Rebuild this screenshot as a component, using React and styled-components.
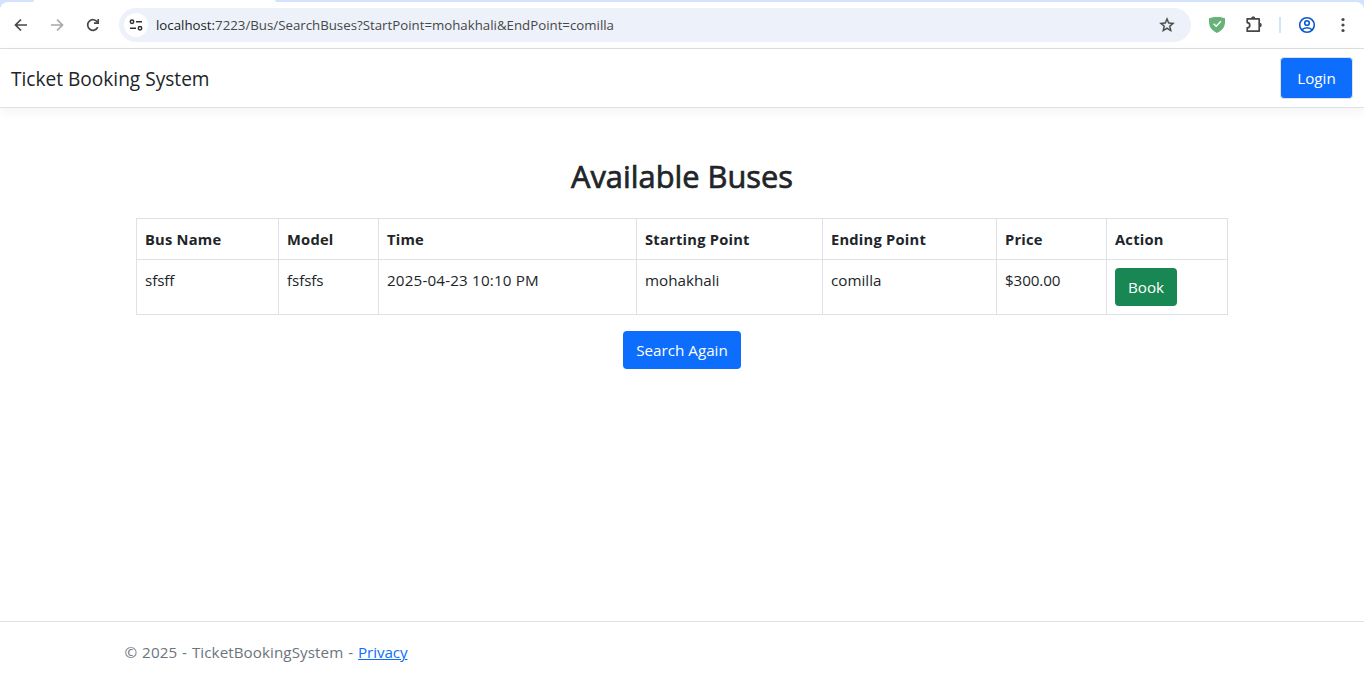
import React from "react";
import styled, { createGlobalStyle, css } from "styled-components";

const GlobalStyle = createGlobalStyle`
  *, *::before, *::after { box-sizing: border-box; }
  body {
    margin: 0;
    background: #fff;
    color: #212529;
    font-family: "Open Sans", "Noto Sans", sans-serif;
    font-size: 15.2px;
    line-height: 24px;
    overflow: hidden;
  }
`;

const Page = styled.div`
  display: flex;
  flex-direction: column;
  height: 681px;
`;

const TabStrip = styled.div`
  display: flex;
  justify-content: space-between;
  height: 2px;
  flex: none;
`;

const StripSegment = styled.div`
  width: ${(p) => p.$width};
  background: #d3e3fd;
  border-radius: ${(p) => p.$radius};
`;

const ToolbarFrame = styled.div`
  flex: none;
  background: linear-gradient(#d3e3fd 10px, #fff 10px);
`;

const Toolbar = styled.div`
  display: flex;
  align-items: center;
  height: 47px;
  padding: 0 12px 1px 12px;
  background: #fff;
  border-bottom: 1px solid #dfdfdf;
  border-radius: 8px 8px 0 0;
`;

const IconButton = styled.button`
  display: flex;
  align-items: center;
  justify-content: center;
  flex: none;
  width: 18px;
  height: 20px;
  margin: 0 0 0 ${(p) => p.$gap || 0}px;
  padding: 0;
  border: 0;
  background: none;
  color: ${(p) => p.$color || "#474747"};
  svg { display: block; }
`;

const AddressBar = styled.div`
  display: flex;
  align-items: center;
  width: 1072px;
  flex: none;
  height: 34px;
  margin-left: 17px;
  padding: 0 15px 0 5px;
  border-radius: 17px;
  background: #ecf1fa;
`;

const SiteInfo = styled.div`
  display: flex;
  align-items: center;
  justify-content: center;
  width: 24px;
  height: 24px;
  border-radius: 50%;
  background: #fff;
`;

const Url = styled.span`
  flex: 1;
  margin-left: 8px;
  color: #474747;
  font-size: 13.27px;
  line-height: 20px;
  white-space: nowrap;
  b { color: #1f1f1f; font-weight: 400; }
`;

const Divider = styled.span`
  flex: none;
  width: 2px;
  height: 16px;
  margin-left: 16px;
  background: #d3e3fd;
`;

const Header = styled.header`
  display: flex;
  align-items: center;
  justify-content: space-between;
  flex: none;
  height: 59px;
  padding: 0 11px;
  border-bottom: 1px solid #dee2e6;
  box-shadow: 0 4px 12px rgba(0, 0, 0, 0.05);
`;

const Brand = styled.a`
  font-size: 19.1px;
  line-height: 30px;
  padding-top: 2px;
`;

const variants = {
  primary: "#0d6efd",
  success: "#198754",
};

const Button = styled.button`
  display: block;
  width: ${(p) => p.$width}px;
  height: 38px;
  padding: 0;
  border: 0;
  border-radius: 4px;
  background: ${(p) => variants[p.$variant]};
  color: #fff;
  font: inherit;
  text-align: center;
  white-space: nowrap;
  ${(p) =>
    p.$outlined &&
    css`
      height: 42px;
      border: 1px solid #dee2e6;
      padding-bottom: 1px;
    `}
`;

const Main = styled.main`
  flex: 1;
  width: 1092px;
  margin: 0 auto;
  padding-top: 49px;
  display: flex;
  flex-direction: column;
  align-items: center;
`;

const Title = styled.h2`
  margin: 0 0 23px;
  font-size: 30.8px;
  font-weight: 400;
  line-height: 38px;
  -webkit-text-stroke: 0.7px currentColor;
`;

const Table = styled.table`
  width: 1092px;
  margin-bottom: 16px;
  border-collapse: collapse;
  table-layout: fixed;
  th, td {
    padding: 8px;
    border: 1px solid #dee2e6;
    text-align: left;
    vertical-align: top;
    white-space: nowrap;
  }
  th {
    font-weight: 700;
    font-size: 14.7px;
    letter-spacing: 0.23px;
  }
`;

const Col = styled.col`
  width: ${(p) => p.$width}px;
`;

const Value = styled.td`
  letter-spacing: ${(p) => p.$spacing || 0}px;
`;

const Footer = styled.footer`
  flex: none;
  height: 60px;
  padding: 18px 124.5px 0;
  border-top: 1px solid #dee2e6;
  color: #6c757d;
  white-space: nowrap;
  letter-spacing: 0.07px;
  word-spacing: 0.9px;
  a {
    color: #0d6efd;
    text-decoration: underline;
    letter-spacing: -0.1px;
  }
`;

const columns = [
  { label: "Bus Name", width: 142 },
  { label: "Model", width: 100 },
  { label: "Time", width: 258 },
  { label: "Starting Point", width: 186 },
  { label: "Ending Point", width: 174 },
  { label: "Price", width: 110 },
  { label: "Action", width: 121 },
];

const buses = [
  [
    { value: "sfsff", spacing: -0.1 },
    { value: "fsfsfs", spacing: -0.1 },
    { value: "2025-04-23 10:10 PM", spacing: 0.17 },
    { value: "mohakhali" },
    { value: "comilla" },
    { value: "$300.00", spacing: -0.1 },
  ],
];

const BackIcon = () => (
  <svg width="14" height="14" viewBox="0 0 14 14" fill="none" stroke="currentColor" strokeWidth="1.7">
    <path d="M13 7H2M7 1.5 1.5 7 7 12.5" />
  </svg>
);

const ForwardIcon = () => (
  <svg width="14" height="14" viewBox="0 0 14 14" fill="none" stroke="currentColor" strokeWidth="1.7">
    <path d="M1 7h11M7 1.5 12.5 7 7 12.5" />
  </svg>
);

const ReloadIcon = () => (
  <svg width="14" height="14" viewBox="0 0 14 14" fill="none" stroke="currentColor" strokeWidth="1.7">
    <path d="M11.8 9.2A5.3 5.3 0 1 1 11.5 4.2" />
    <path d="M12.2 1v4.2H8" />
  </svg>
);

const TuneIcon = () => (
  <svg width="14" height="12" viewBox="0 0 14 12" fill="none" stroke="#303030" strokeWidth="1.5">
    <circle cx="3" cy="2.8" r="1.7" />
    <path d="M7 2.8h6M1 9.2h6" />
    <circle cx="11" cy="9.2" r="1.7" />
  </svg>
);

const StarIcon = () => (
  <svg width="18" height="18" viewBox="0 0 24 24" fill="currentColor" stroke="currentColor" strokeWidth="0.4">
    <path d="m22 9.24-7.19-.62L12 2 9.19 8.63 2 9.24l5.46 4.73L5.82 21 12 17.27 18.18 21l-1.63-7.03L22 9.24zM12 15.4l-3.76 2.27 1-4.28-3.32-2.88 4.38-.38L12 6.1l1.71 4.04 4.38.38-3.32 2.88 1 4.28L12 15.4z" />
  </svg>
);

const ShieldIcon = () => (
  <svg width="16" height="16" viewBox="0 0 16 16">
    <path d="M0 1.2C3 .3 5 0 8 0s5 .3 8 1.2V5c0 5-3 8.8-8 11C3 13.8 0 10 0 5z" fill="#67b279" />
    <path d="m4.600 6.800 2.600 2.500 4.700-5" fill="none" stroke="#fff" strokeWidth="1.3" />
  </svg>
);

const PuzzleIcon = () => (
  <svg width="18" height="18" viewBox="0 0 18 18" fill="none" stroke="currentColor" strokeWidth="1.7" strokeLinejoin="round">
    <path d="M2.200 2.800H14.200V15.200H2.200V11.800A2.600 2.600 0 0 0 2.200 6.600Z" />
    <path d="M6 2.800a2.200 2.500 0 0 1 4.400 0ZM14.200 6.800a2.600 2.200 0 0 1 0 4.400Z" fill="currentColor" stroke="none" />
  </svg>
);

const ProfileIcon = () => (
  <svg width="18" height="18" viewBox="0 0 18 18" fill="none" stroke="currentColor" strokeWidth="1.6">
    <circle cx="9" cy="9" r="7.3" />
    <circle cx="9" cy="7" r="2.3" />
    <path d="M3.800 14c1.200-1.500 3-2.300 5.200-2.300s4 .8 5.200 2.300" />
  </svg>
);

const MenuIcon = () => (
  <svg width="4" height="16" viewBox="0 0 4 16" fill="currentColor">
    <circle cx="2" cy="2.5" r="1.6" />
    <circle cx="2" cy="8" r="1.6" />
    <circle cx="2" cy="13.5" r="1.6" />
  </svg>
);

export default function App() {
  return (
    <Page>
      <GlobalStyle />
      <TabStrip>
        <StripSegment $width="34px" $radius="0 0 4px 0" />
        <StripSegment $width="1089px" $radius="0 0 0 4px" />
      </TabStrip>
      <ToolbarFrame>
        <Toolbar>
          <IconButton><BackIcon /></IconButton>
          <IconButton $gap={18} $color="#a8a8a8"><ForwardIcon /></IconButton>
          <IconButton $gap={18}><ReloadIcon /></IconButton>
          <AddressBar>
            <SiteInfo><TuneIcon /></SiteInfo>
            <Url><b>localhost:</b>7223/Bus/SearchBuses?StartPoint=mohakhali&amp;EndPoint=comilla</Url>
            <IconButton><StarIcon /></IconButton>
          </AddressBar>
          <IconButton $gap={17}><ShieldIcon /></IconButton>
          <IconButton $gap={19}><PuzzleIcon /></IconButton>
          <Divider />
          <IconButton $gap={17} $color="#0b57d0"><ProfileIcon /></IconButton>
          <IconButton $gap={18}><MenuIcon /></IconButton>
        </Toolbar>
      </ToolbarFrame>
      <Header>
        <Brand>Ticket Booking System</Brand>
        <Button $variant="primary" $width={73} $outlined>Login</Button>
      </Header>
      <Main>
        <Title>Available Buses</Title>
        <Table>
          <colgroup>
            {columns.map((c) => <Col key={c.label} $width={c.width} />)}
          </colgroup>
          <thead>
            <tr>{columns.map((c) => <th key={c.label}>{c.label}</th>)}</tr>
          </thead>
          <tbody>
            {buses.map((bus) => (
              <tr key={bus[0].value}>
                {bus.map((cell) => (
                  <Value key={cell.value} $spacing={cell.spacing}>{cell.value}</Value>
                ))}
                <td><Button $variant="success" $width={62}>Book</Button></td>
              </tr>
            ))}
          </tbody>
        </Table>
        <Button $variant="primary" $width={118}>Search Again</Button>
      </Main>
      <Footer>© 2025 - TicketBookingSystem - <a>Privacy</a></Footer>
    </Page>
  );
}
